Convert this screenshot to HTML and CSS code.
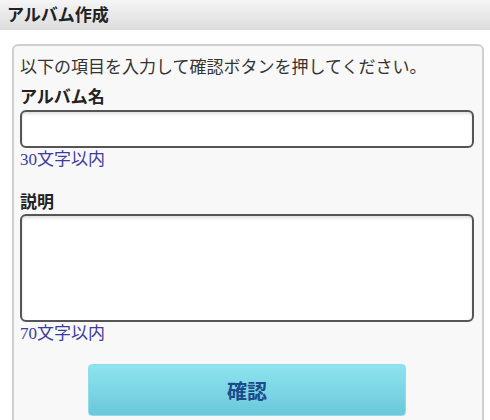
FILE: index.html
```html
<!DOCTYPE html>
<html lang="ja">
<head>
<meta charset="utf-8">
<title>アルバム作成</title>
<link rel="stylesheet" href="styles.css">
</head>
<body>
<header class="titlebar">アルバム作成</header>
<main class="panel">
  <p class="lead">以下の項目を入力して確認ボタンを押してください。</p>
  <div class="field">
    <label class="label" for="name">アルバム名</label>
    <input class="input" id="name" type="text">
    <div class="hint">30文字以内</div>
  </div>
  <div class="field field-second">
    <label class="label" for="desc">説明</label>
    <textarea class="textarea" id="desc"></textarea>
    <div class="hint">70文字以内</div>
  </div>
  <div class="actions">
    <button class="btn" type="button">確認</button>
  </div>
</main>
</body>
</html>
```

FILE: styles.css
```css
* { box-sizing: border-box; }
html, body {
  margin: 0;
  padding: 0;
  background: #ffffff;
  font-family: "Noto Sans CJK JP", "Noto Sans", sans-serif;
  color: #333333;
}
.titlebar {
  height: 30px;
  line-height: 28px;
  padding: 0 7px;
  font-size: 17px;
  font-weight: bold;
  color: #222222;
  background: linear-gradient(#f5f5f5, #dcdcdc);
}
.panel {
  margin: 14px 6px 0 12px;
  padding: 8px 8px 20px 6px;
  background: #f8f8f8;
  border: 2px solid #cfcfcf;
  border-radius: 6px;
}
.lead {
  margin: 0;
  font-size: 17px;
  line-height: 24px;
  color: #333333;
}
.field {
  display: flex;
  flex-direction: column;
  margin-top: 6px;
}
.field-second { margin-top: 17px; }
.label {
  font-size: 17px;
  line-height: 24px;
  font-weight: bold;
  color: #222222;
}
.input, .textarea {
  display: block;
  width: 100%;
  margin: 2px 0 0;
  border: 2px solid #555555;
  border-radius: 6px;
  background: #ffffff;
  box-shadow: inset 0 2px 3px rgba(0,0,0,0.12);
  font-size: 16px;
}
.input { height: 38px; }
.textarea { height: 108px; margin-top: 1px; resize: none; }
.hint {
  font-family: "Liberation Serif", "Noto Sans CJK JP", serif;
  font-size: 17px;
  line-height: 24px;
  color: #3c3c9c;
}
.actions {
  display: flex;
  justify-content: center;
  margin-top: 18px;
}
.btn {
  width: 70%;
  height: 52px;
  border: 1px solid #8fdcea;
  border-radius: 4px;
  background: linear-gradient(#8ee4f0, #6ac8da);
  font-family: "Noto Sans CJK JP", sans-serif;
  font-size: 20px;
  font-weight: bold;
  color: #1c4a8a;
}
```
